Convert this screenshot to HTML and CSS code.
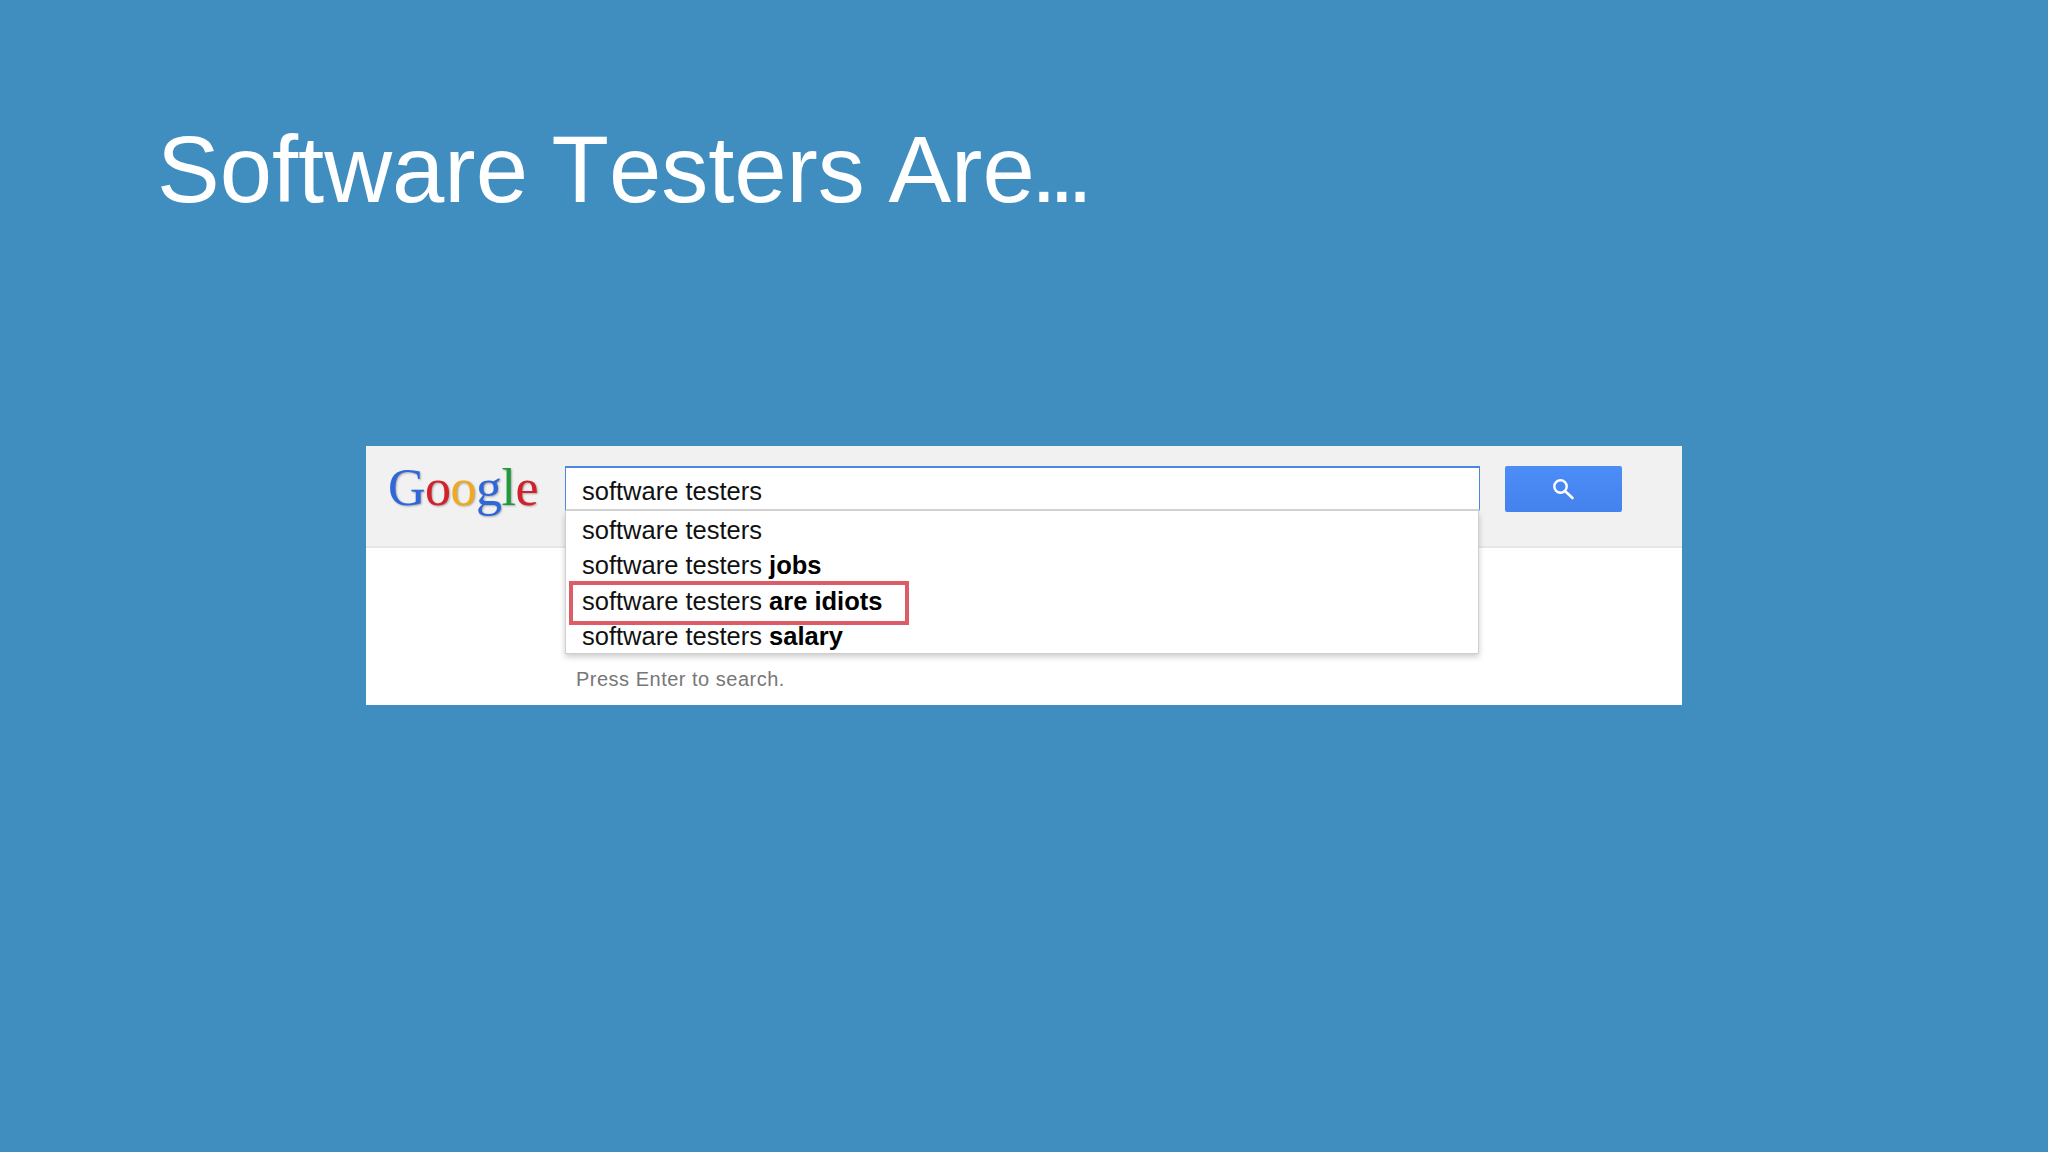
FILE: index.html
```html
<!DOCTYPE html>
<html>
<head>
  <title>Software Testers Are...</title>
  <link rel="stylesheet" href="styles.css">
</head>
<body>
  <h1>Software Testers Are<span class="dots">...</span></h1>

  <div class="shot">
    <div class="shot-header">
      <div class="logo"><span class="blue">G</span><span class="red">o</span><span class="yellow">o</span><span class="blue">g</span><span class="green">l</span><span class="red">e</span></div>
      <div class="search-col">
        <div class="search-input">software testers</div>
        <div class="suggestions">
          <div class="suggestion">software testers</div>
          <div class="suggestion">software testers <b>jobs</b></div>
          <div class="suggestion">software testers <b>are idiots</b><span class="highlight"></span></div>
          <div class="suggestion">software testers <b>salary</b></div>
        </div>
      </div>
      <div class="search-button">
        <svg width="24" height="24" viewBox="0 0 24 24">
          <circle cx="8.5" cy="9.5" r="6.2" fill="none" stroke="#fff" stroke-width="2.4"/>
          <path d="M13 14L20.5 21" stroke="#fff" stroke-width="2.6" stroke-linecap="round"/>
        </svg>
      </div>
    </div>
    <div class="shot-body">
      <p class="hint">Press Enter to search.</p>
    </div>
  </div>
</body>
</html>
```

FILE: styles.css
```css
body {
  margin: 0;
  height: 1152px;
  overflow: hidden;
  background-color: #408dbf;
  font-family: "Liberation Sans", Arial, sans-serif;
}

h1 {
  margin: 0;
  padding: 115px 0 0 157px;
  height: 446px;
  box-sizing: border-box;
  font-size: 94px;
  line-height: 110px;
  font-weight: normal;
  font-kerning: none;
  word-spacing: -2.6px;
  color: #fff;
}

.dots {
  margin-left: -4px;
  letter-spacing: -8px;
}

.shot {
  width: 1316px;
  height: 259px;
  margin-left: 366px;
  background-color: #fff;
}

.shot-header {
  display: flex;
  height: 102px;
  box-sizing: border-box;
  padding: 20px 0 0 22px;
  background-color: #f1f1f2;
  border-bottom: 2px solid #e6e6e6;
}

.logo {
  width: 177px;
  height: 60px;
  margin-top: -10px;
  font-family: "Liberation Serif", serif;
  font-size: 52px;
  line-height: 64px;
  letter-spacing: -0.5px;
  text-shadow: 1px 1px 2px rgba(0, 0, 0, 0.3);
}

.blue { color: #2f66d8; }
.red { color: #d4202a; }
.yellow { color: #f0a81e; }
.green { color: #1f9a3c; }

.search-col {
  position: relative;
  width: 915px;
}

.search-input {
  height: 45px;
  box-sizing: border-box;
  padding: 9px 0 0 16px;
  background-color: #fff;
  border: 1px solid #4d86e0;
  border-top-width: 2px;
  border-bottom: 2px solid #d5d5d5;
  font-size: 25.5px;
  line-height: 29px;
  color: #111;
}

.suggestions {
  position: absolute;
  top: 45px;
  left: 0;
  width: 914px;
  height: 143px;
  box-sizing: border-box;
  padding-top: 2px;
  background-color: #fff;
  border: 1px solid #cfcfcf;
  border-top: none;
  box-shadow: 0 3px 6px rgba(0, 0, 0, 0.2);
}

.suggestion {
  position: relative;
  height: 35.3px;
  padding-left: 16px;
  font-size: 25.5px;
  line-height: 35px;
  color: #111;
}

.suggestion b {
  color: #000;
}

.highlight {
  position: absolute;
  top: -3px;
  left: 3px;
  width: 332px;
  height: 36px;
  border: 4px solid #dc5d66;
}

.search-button {
  display: flex;
  align-items: center;
  justify-content: center;
  width: 117px;
  height: 46px;
  margin-left: 25px;
  background: linear-gradient(#4d8df7, #4482ee);
  border-radius: 2px;
}

.shot-body {
  position: relative;
  height: 157px;
}

.hint {
  margin: 0;
  padding: 119px 0 0 210px;
  font-size: 20px;
  line-height: 24px;
  letter-spacing: 0.5px;
  color: #777;
}
```
